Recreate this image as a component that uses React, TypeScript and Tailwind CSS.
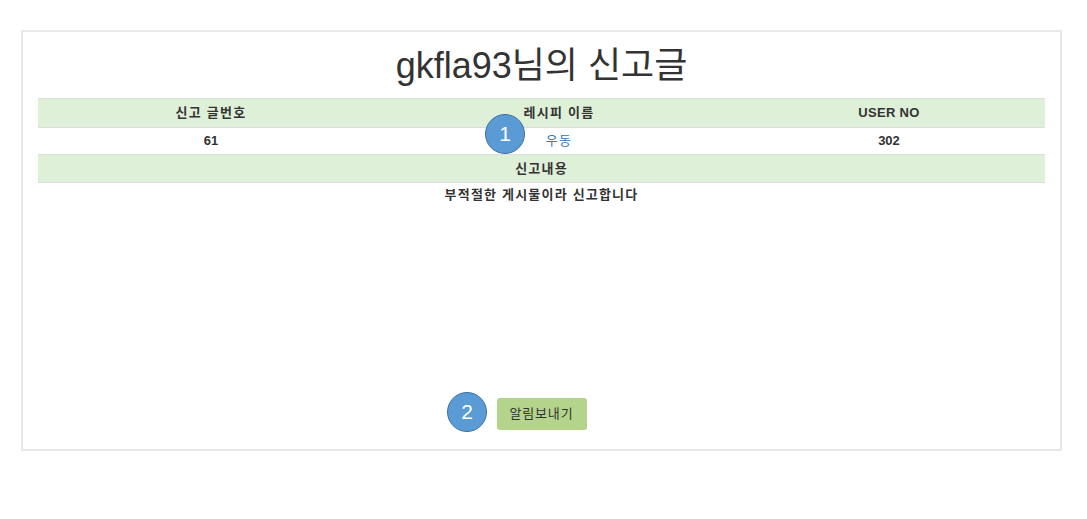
import React from 'react';

const font = { fontFamily: '"Liberation Sans", "Noto Sans CJK KR", Arial, sans-serif' };

// 숫자 배지 (스크린샷 주석)
function Badge({ n, className }: { n: number; className: string }) {
  return (
    <div
      className={`absolute w-[40px] h-[40px] rounded-full bg-[#5b9bd5] border border-[#41719c] text-white text-[21px] flex items-center justify-center ${className}`}
    >
      {n}
    </div>
  );
}

export default function App() {
  const report = { no: 61, recipe: '우동', userNo: 302, content: '부적절한 게시물이라 신고합니다' };

  return (
    <div className="w-[1087px] h-[519px] bg-white pt-[30px] pl-[21px]" style={font}>
      <div className="relative w-[1041px] h-[421px] border-2 border-[#e8e8e8] px-[15px] flex flex-col text-[#333]">
        <h1 className="mt-[14px] mb-[12px] h-[40px] leading-[40px] text-[36px] text-center font-normal">
          gkfla93님의 신고글
        </h1>

        {/* 신고 정보 테이블 */}
        <div className="text-[13px] font-bold">
          <div className="grid grid-cols-[346px_350px_310px] h-[29px] items-center text-center bg-[#dff0d8] border-t border-[#ddd]">
            <div className="tracking-[1.3px]">신고 글번호</div>
            <div className="tracking-[1.3px]">레시피 이름</div>
            <div className="tracking-[0.3px]">USER NO</div>
          </div>
          <div className="grid grid-cols-[346px_350px_310px] h-[27px] items-center text-center border-t border-[#ddd]">
            <div>{report.no}</div>
            <div className="text-[#337ab7] font-normal tracking-[1.2px]">{report.recipe}</div>
            <div>{report.userNo}</div>
          </div>
          <div className="h-[29px] flex items-center justify-center bg-[#dff0d8] border-y border-[#ddd] tracking-[1.2px]">신고내용</div>
          <div className="h-[24px] flex items-center justify-center tracking-[1.2px]">{report.content}</div>
        </div>

        <div className="flex-1" />

        <div className="flex justify-center mb-[19px]">
          <button className="w-[90px] h-[32px] rounded-[3px] bg-[#b3d48a] text-[13px] text-[#333] tracking-[0.8px]">알림보내기</button>
        </div>

        <Badge n={1} className="left-[462px] top-[82px]" />
        <Badge n={2} className="left-[424px] top-[360px]" />
      </div>
    </div>
  );
}
